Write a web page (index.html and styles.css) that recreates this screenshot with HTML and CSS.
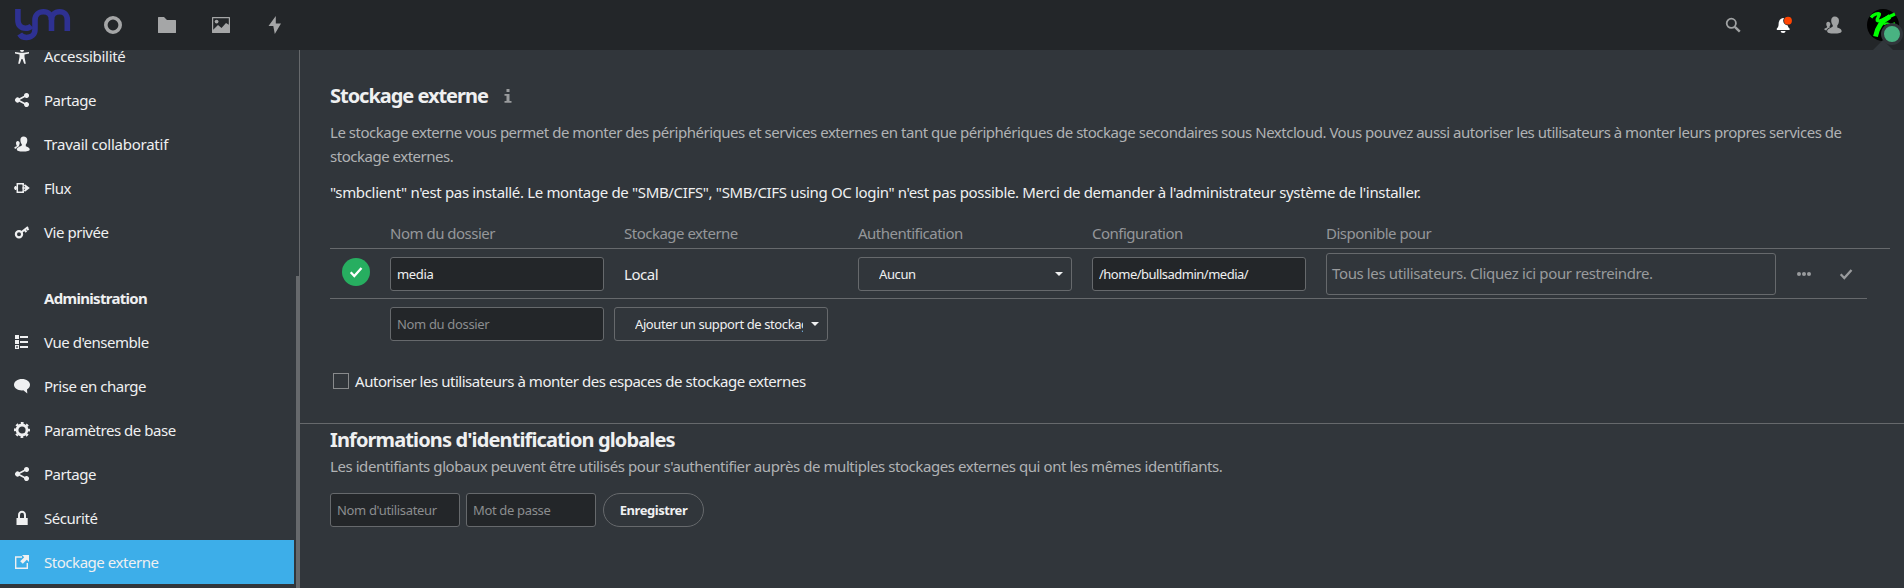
FILE: index.html
```html
<!DOCTYPE html>
<html lang="fr">
<head>
<meta charset="utf-8">
<title>Stockage externe - Paramètres</title>
<link rel="stylesheet" href="styles.css">
</head>
<body>
<svg class="defs" width="0" height="0">
  <defs>
    <symbol id="share" viewBox="0 0 16 16"><path d="M12.500 1a2.500 2.500 0 0 0-2.500 2.500v.3L5.300 6.200a2.500 2.500 0 1 0 0 3.600L10 12.200v.3a2.500 2.500 0 1 0 .8-1.800L6 8.300v-.6l4.800-2.400A2.500 2.500 0 1 0 12.500 1z"/></symbol>
    <symbol id="people" viewBox="0 0 16 16"><path d="M9.500.5C7.500.5 6.400 2 6.400 4c0 2 .6 3.300 1.400 4.200v1.200c-.8.600-1.800 1.100-3 1.600-1 .4-2 1.300-2 2.500 0 1.600 2.200 2 6.200 2s6.700-.4 6.700-2c0-1.600-1.200-2.300-3.900-3.300V8.500c.9-1 1.500-2.500 1.500-4.500S11.800.5 9.500.5z"/><path d="M3.700 5C2.600 5 2 6 2 7.200c0 1 .3 1.700.7 2.200v.9c-.8.300-2.400.7-2.400 1.500 0 .6.800.9 1.900 1 .4-1.300 1.700-2 3.400-2.700l-.7-.5v-.3c.5-.5.8-1.200.8-2.100C5.700 6 4.900 5 3.700 5z"/></symbol>
    <symbol id="check" viewBox="0 0 16 16"><path d="M2.700 8.300l3.600 3.700 7.200-8" fill="none" stroke="currentColor" stroke-width="2.300"/></symbol>
    <symbol id="caret" viewBox="0 0 8 4"><path d="M0 0h8L4 4z"/></symbol>
  </defs>
</svg>

<header class="topbar">
  <div class="topbar-left">
    <svg class="logo" viewBox="0 0 56 32"><g fill="none" stroke="#2e3192" stroke-width="5.600"><path d="M2.900 0v11c0 5.500 3 8.200 7.600 8.200 2.500 0 4.500-.6 6-2.200"/><path d="M52.300 22V11c0-5-3-8.200-7.700-8.200S36.500 6 36.500 11v11"/><path d="M36.500 11c0-5-3-8.200-8-8.200s-8.500 3.200-8.500 8.200v9.500c0 4.700-3.500 8-8.500 8-3 0-5.300-1-6.800-3.500"/></g></svg>
    <nav class="apps">
      <svg viewBox="0 0 20 20"><circle cx="10" cy="10" r="7.200" fill="none" stroke="currentColor" stroke-width="3.600"/></svg>
      <svg viewBox="0 0 20 20"><path d="M1.600 2a.6.600 0 0 0-.6.600v14.800c0 .3.300.6.600.6h16.800c.3 0 .6-.3.600-.6V5.600a.6.600 0 0 0-.6-.6H10L7 2z"/></svg>
      <svg viewBox="0 0 20 20"><path fill-rule="evenodd" d="M1.600 2a.6.600 0 0 0-.6.600v14.800c0 .3.300.6.600.6h16.800c.3 0 .6-.3.600-.6V2.600a.6.600 0 0 0-.6-.6zM2.200 3.200h15.600v6.600L15 8l-4.500 5L7 10l-4.800 4.800z"/><circle cx="5.600" cy="6.600" r="1.900"/></svg>
      <svg viewBox="0 0 20 20"><path d="M10.800 1L3.500 11h4.800L9.800 19 16 8.500h-5.200z"/></svg>
    </nav>
  </div>
  <div class="topbar-right">
    <svg class="tool" viewBox="0 0 16 16"><circle cx="6.300" cy="6.300" r="4.600" fill="none" stroke="currentColor" stroke-width="1.800"/><path d="M9.800 9.800l5 4.800" stroke="currentColor" stroke-width="2.400"/></svg>
    <svg class="tool bell" viewBox="0 0 16 16"><path d="M8 1C5 1.600 3.600 4 3.600 7c0 2.500-.6 3.300-1.800 4.500V13h12.800v-1.500c-1.300-1.200-1.900-2-1.900-4.500V1zM5.600 14a2.500 2 0 0 0 5 0z"/><circle cx="13" cy="3.700" r="4.800" fill="#232629"/><circle cx="13" cy="3.700" r="3.900" fill="#ff4402"/></svg>
    <svg class="tool people" viewBox="0 0 16 16"><use href="#people"/></svg>
    <div class="account">
      <svg class="avatar" viewBox="0 0 32 32"><circle cx="16" cy="16" r="16" fill="#000"/><g fill="none" stroke="#0f0"><path d="M4 8.500C6 5.500 12 3.500 12.500 5c.3 1.500-3 4.500-2.300 6.500C12 13.500 20 8.500 28 5" stroke-width="3.200"/><path d="M23 7.500C15 11.500 10.500 17 8.500 27.500" stroke-width="4.800"/><path d="M17 15.500l3-1.500 3 1M25 15l3-1" stroke-width="1.500"/></g></svg>
      <span class="status"></span>
    </div>
  </div>
</header>

<div class="content">
  <aside class="sidebar">
    <ul class="nav">
      <li><svg viewBox="0 0 16 16"><circle cx="8" cy="2" r="2"/><path d="M1 4l5 .8h4L15 4v1.500l-4.500 1V9l1.300 6.800h-1.600L8.500 11h-1l-1.700 4.800H4.200L5.500 9V6.500L1 5.500z"/></svg>Accessibilité</li>
      <li><svg><use href="#share"/></svg>Partage</li>
      <li class="loose"><svg><use href="#people"/></svg>Travail collaboratif</li>
      <li><svg viewBox="0 0 16 16"><path d="M9.200 5V3.700H3.300v8.600h5.900V11M0 8h3M1.500 6v4" fill="none" stroke="currentColor" stroke-width="1.500"/><path d="M8.500 7.200h3L9.800 5.400 11 4.200 15.800 8 11 11.800l-1.200-1.200 1.700-1.800h-3z"/><path d="M8.500 4.500h1.400v7H8.500z"/></svg>Flux</li>
      <li><svg viewBox="0 0 16 16"><circle cx="5" cy="10.200" r="3.100" fill="none" stroke="currentColor" stroke-width="2.200"/><path d="M7 8.500L14 3M10.600 5.800l1.800 2.200M12.800 4l1.700 2" fill="none" stroke="currentColor" stroke-width="2"/></svg>Vie privée</li>
      <li class="caption">Administration</li>
      <li><svg viewBox="0 0 16 16"><path d="M1 1h4v4H1zM6 2h8v2H6zM1 6h4v4H1zM6 7h8v2H6zM6 12h8v2H6z"/><path d="M1.600 11.600h2.800v2.800H1.600z" fill="none" stroke="currentColor" stroke-width="1.200"/></svg>Vue d'ensemble</li>
      <li><svg viewBox="0 0 16 16"><path d="M8 1c4.500 0 8 2.500 8 5.800 0 2-1.200 3.600-3 4.600l.3 4.100-4-3.200L8 12.400c-4.500 0-8-2.400-8-5.600S3.500 1 8 1z"/></svg>Prise en charge</li>
      <li><svg viewBox="0 0 16 16"><circle cx="8" cy="8" r="5" fill="none" stroke="currentColor" stroke-width="2.800"/><circle cx="8" cy="8" r="7" fill="none" stroke="currentColor" stroke-width="2" stroke-dasharray="2.750" stroke-dashoffset="1.370"/></svg>Paramètres de base</li>
      <li><svg><use href="#share"/></svg>Partage</li>
      <li><svg viewBox="0 0 16 16"><path d="M2.500 8h11.200v7H2.500z"/><path d="M5 8V5a3 3.200 0 0 1 6 0v3" fill="none" stroke="currentColor" stroke-width="2"/></svg>Sécurité</li>
      <li class="active"><svg viewBox="0 0 16 16"><path d="M8 3H1.700v11.300h11.600V9" fill="none" stroke="currentColor" stroke-width="1.400"/><path d="M8 1h7v7l-2.200-2.200-4 4L6.200 7.200l4-4z"/></svg>Stockage externe</li>
    </ul>
    <span class="scroll-thumb"></span>
  </aside>

  <main class="main">
    <section class="storage">
      <div class="title-row">
        <h2>Stockage externe</h2>
        <svg class="info" viewBox="0 0 16 16"><path d="M6.500 1h3v3h-3zM4.500 6h5v7h2v1.700h-7V13h2V7.700h-2z"/></svg>
      </div>
      <p class="hint">Le stockage externe vous permet de monter des périphériques et services externes en tant que périphériques de stockage secondaires sous Nextcloud. Vous pouvez aussi autoriser les utilisateurs à monter leurs propres services de stockage externes.</p>
      <p class="warning">"smbclient" n'est pas installé. Le montage de "SMB/CIFS", "SMB/CIFS using OC login" n'est pas possible. Merci de demander à l'administrateur système de l'installer.</p>

      <div class="grid head">
        <span></span><span>Nom du dossier</span><span>Stockage externe</span><span>Authentification</span><span>Configuration</span><span>Disponible pour</span>
      </div>
      <div class="grid row">
        <span class="ok"><svg><use href="#check"/></svg></span>
        <input class="field" value="media">
        <span>Local</span>
        <div class="select"><span>Aucun</span><svg><use href="#caret"/></svg></div>
        <input class="field path" value="/home/bullsadmin/media/">
        <div class="applicable">Tous les utilisateurs. Cliquez ici pour restreindre.</div>
        <div class="actions">
          <svg viewBox="0 0 16 16"><circle cx="3" cy="8" r="2"/><circle cx="8" cy="8" r="2"/><circle cx="13" cy="8" r="2"/></svg>
          <svg><use href="#check"/></svg>
        </div>
      </div>
      <div class="add-row">
        <input class="field" placeholder="Nom du dossier">
        <div class="select"><span>Ajouter un support de stockage</span><svg><use href="#caret"/></svg></div>
      </div>
      <label class="allow"><span class="box"></span>Autoriser les utilisateurs à monter des espaces de stockage externes</label>
    </section>

    <section class="global">
      <h2>Informations d'identification globales</h2>
      <p class="hint">Les identifiants globaux peuvent être utilisés pour s'authentifier auprès de multiples stockages externes qui ont les mêmes identifiants.</p>
      <form class="credentials">
        <input class="field" placeholder="Nom d'utilisateur">
        <input class="field" placeholder="Mot de passe">
        <button type="button">Enregistrer</button>
      </form>
    </section>
  </main>
</div>
</body>
</html>
```

FILE: styles.css
```css
* { box-sizing: border-box; }
body {
  margin: 0;
  height: 588px;
  overflow: hidden;
  display: flex;
  flex-direction: column;
  background: #31363b;
  color: #eff0f1;
  font: 15px/24px "Noto Sans", sans-serif;
  letter-spacing: -0.46px;
}
svg { fill: currentColor; display: block; flex: none; }
.defs { position: absolute; }
h2, p, ul { margin: 0; padding: 0; }
h2 { font-size: 20px; font-weight: 700; line-height: 28px; letter-spacing: -1.03px; }

.topbar {
  flex: none;
  height: 50px;
  background: #232629;
  display: flex;
  justify-content: space-between;
}
.topbar-left, .topbar-right, .apps { display: flex; align-items: center; }
.logo { width: 56px; height: 32px; margin-left: 15px; }
.apps { gap: 34px; margin-left: 32px; color: #a5a6a7; }
.apps svg { width: 20px; height: 20px; }
.topbar-right { padding-right: 5px; }
.tool { width: 16px; height: 16px; color: #a0a2a3; margin-right: 34px; }
.tool.bell { color: #fff; overflow: visible; }
.tool.people { width: 18px; height: 18px; margin-right: 25px; margin-left: -1px; }
.account { position: relative; height: 50px; padding-top: 9px; }
.account::after {
  content: "";
  position: absolute;
  left: 6px;
  bottom: 0;
  border: 10px solid transparent;
  border-top: 0;
  border-bottom-color: #31363b;
}
.avatar { width: 32px; height: 32px; }
.status {
  position: absolute;
  z-index: 1;
  left: 14px;
  top: 23px;
  width: 22px;
  height: 22px;
  border-radius: 50%;
  background: #49b382;
  border: 3px solid #31363b;
}

.content { flex: 1; min-height: 0; display: flex; }
.sidebar {
  position: relative;
  flex: none;
  width: 300px;
  border-right: 1px solid #66696c;
  overflow: hidden;
}
.nav { list-style: none; width: 294px; margin-top: -16px; }
.nav li {
  height: 44px;
  display: flex;
  align-items: center;
  gap: 14px;
  padding-left: 14px;
  padding-bottom: 1px;
}
.nav li:first-child { letter-spacing: -0.3px; }
.nav svg { width: 16px; height: 16px; margin-top: 1px; }
.nav .loose { letter-spacing: -0.25px; }
.nav .caption { margin-top: 22px; padding-left: 44px; font-weight: 700; letter-spacing: -0.69px; }
.nav .active { background: #3daee9; }
.scroll-thumb {
  position: absolute;
  right: 0;
  top: 226px;
  bottom: 0;
  width: 3px;
  background: #66696c;
}

.main { flex: 1; min-width: 0; }
.storage { height: 374px; padding: 32px 14px 0 30px; border-bottom: 1px solid #66696c; }
.title-row { display: flex; align-items: center; gap: 12px; }
.info { width: 16px; height: 16px; color: #999b9d; }
.hint { color: #b0b2b4; }
.storage .hint { margin: 10px 30px 0 0; letter-spacing: -0.483px; }
.warning { margin-top: 12px; letter-spacing: -0.34px; }
.grid {
  display: grid;
  grid-template-columns: 60px 234px 234px 234px 234px 450px auto;
  align-items: center;
  justify-content: start;
}
.head { height: 32px; margin-top: 13px; padding-top: 0; color: #95979a; letter-spacing: -0.5px; border-bottom: 1px solid #66696c; }
.row { width: 1537px; height: 50px; padding-top: 1px; border-bottom: 1px solid #66696c; }
.row > span { padding-bottom: 1px; }
.row > .ok {
  width: 28px;
  height: 28px;
  margin: -4px 0 0 12px;
  padding: 0;
  border-radius: 50%;
  background: #27ae60;
  color: #fff;
  display: grid;
  place-items: center;
}
.ok svg { width: 16px; height: 16px; }
.field {
  width: 214px;
  height: 34px;
  margin: 0;
  padding: 7px 6px;
  border: 1px solid #66696c;
  border-radius: 3px;
  background: #232629;
  color: #eff0f1;
  font: 13px "Noto Sans", sans-serif;
  letter-spacing: -0.34px;
}
.field.path { letter-spacing: -0.5px; }
.field::placeholder { color: #8b8d8f; opacity: 1; }
.select {
  width: 214px;
  height: 34px;
  padding: 0 8px 0 20px;
  border: 1px solid #66696c;
  border-radius: 3px;
  display: flex;
  align-items: center;
  justify-content: space-between;
  gap: 8px;
  font-size: 13px;
  letter-spacing: -0.4px;
}
.select span { overflow: hidden; white-space: nowrap; }
.select svg { width: 8px; height: 4px; }
.applicable {
  height: 42px;
  line-height: 38px;
  padding-left: 5px;
  border: 1px solid #66696c;
  border-radius: 3px;
  color: #999b9d;
  letter-spacing: -0.37px;
}
.actions { display: flex; gap: 26px; padding-left: 20px; color: #999b9d; }
.actions svg { width: 16px; height: 16px; }
.add-row { display: flex; gap: 10px; padding: 8px 0 0 60px; }
.allow { display: flex; align-items: center; gap: 6px; margin: 28px 0 0 3px; }
.box { width: 16px; height: 16px; border: 1px solid #888a8c; }

.global { padding: 2px 30px 0; }
.global h2 { letter-spacing: -0.88px; }
.global .hint { line-height: 23px; padding-top: 1px; letter-spacing: -0.435px; }
.credentials { display: flex; gap: 6px; margin-top: 15px; }
.credentials .field { width: 130px; }
.credentials button {
  height: 34px;
  width: 101px;
  margin-left: 1px;
  padding: 0;
  border: 1px solid #66696c;
  border-radius: 17px;
  background: none;
  color: #eff0f1;
  font: 700 13px "Noto Sans", sans-serif;
  letter-spacing: -0.44px;
}
```
